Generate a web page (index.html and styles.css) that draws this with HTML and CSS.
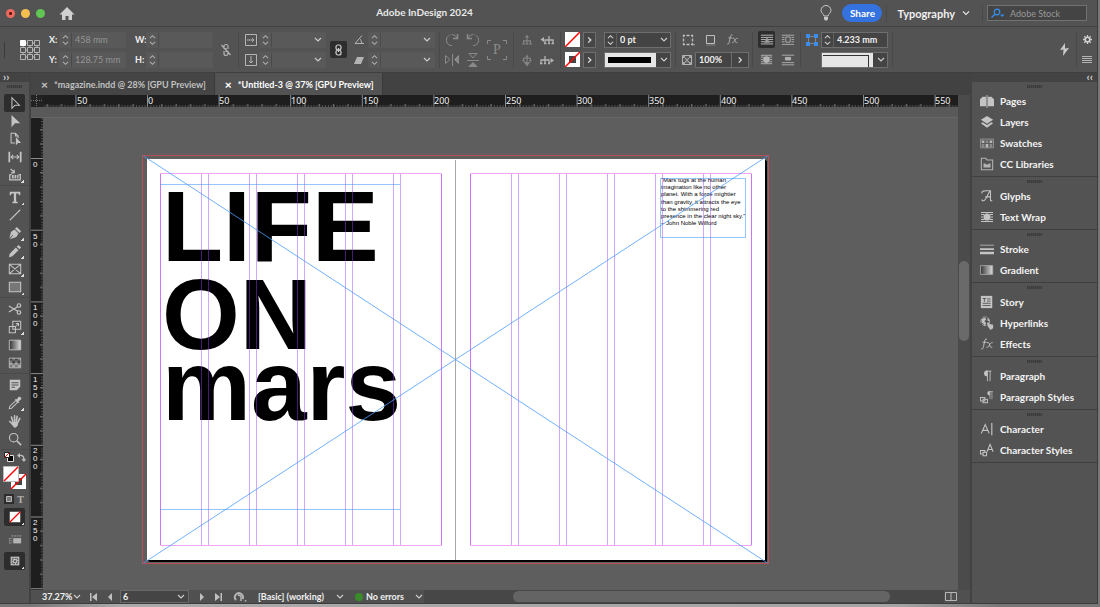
FILE: index.html
```html
<!doctype html>
<html lang='en-US'>
<head>
  <title>Adobe InDesign 2024</title>
  <meta charset='utf-8'>
  <link rel="stylesheet" href="styles.css">
</head>
<body>

<svg class='defs' aria-hidden='true'>
  <symbol id='steps' viewBox='0 0 12 16'><path d='M3 6l3-3 3 3M3 10l3 3 3-3' fill='none' stroke='currentColor' stroke-width='1.2'/></symbol>
  <symbol id='right' viewBox='0 0 12 16'><path d='M4.500 5l3 3-3 3' fill='none' stroke='currentColor' stroke-width='1.5'/></symbol>
  <symbol id='wrap' viewBox='0 0 16 16'><path d='M2 3.500h12M2 5.500h3M11 5.500h3M2 8h2M12 8h2M2 10.500h3M11 10.500h3M2 12.500h12' stroke='currentColor'/><circle cx='8' cy='8' r='3.600' fill='currentColor'/></symbol>
  <symbol id='fx' viewBox='0 0 16 16'><path d='M8 2.500c-2-1-2.500 1-3 3.500l-1 5c-.4 2-1 3-2.500 2.500M3 6h4.500M8 6.500c2-.8 2.500.5 3 2.500s1 3.500 3 2.500M14.500 6.500c-2-.3-3 1.500-4 3s-1.500 2.500-3 2.300' fill='none' stroke='currentColor' stroke-width='1.100'/></symbol>
  <symbol id='para' viewBox='0 0 16 16'><path d='M8 2v6a3 3 0 0 1 0-6z' fill='currentColor' stroke='currentColor'/><path d='M8.500 2v12M11.500 2v12M8 2.500h5' stroke='currentColor'/></symbol>
  <symbol id='tree' viewBox='0 0 14 14'><path d='M7 3v9M3 12V8h8v4M1.500 11.500h3M5.500 11.500h3M9.500 11.500h3' fill='none' stroke='currentColor' stroke-width='1.300'/><path d='M4.500 4L7 1l2.500 3z' fill='currentColor'/></symbol>
</svg>

<div class='window'>
  <header class='titlebar'>
    <div class='lights'><i class='close'></i><i class='min'></i><i class='max'></i></div>
    <button class='plain home' aria-label='Home'><svg width='16' height='14' viewBox='0 0 16 14'><path d='M8 0l7.500 7.500H13V13H9.500V9h-3v4H3V7.500H.5z' fill='#d0d0d0'/></svg></button>
    <h1>Adobe InDesign 2024</h1>
    <div class='title-right'>
      <button class='plain bulb' aria-label='Learn'><svg width='12' height='16' viewBox='0 0 12 16'><path d='M4 11c0-2-3-3-3-5.500a5 5 0 0 1 10 0C11 8 8 9 8 11z' fill='none' stroke='#c8c8c8'/><path d='M4 12h4v2l-1 1.500H5L4 14z' fill='#c8c8c8'/></svg></button>
      <button class='share'>Share</button>
      <button class='plain workspace-name'>Typography <svg width='8' height='6' viewBox='0 0 8 6'><path d='M1 1.500l3 3 3-3' fill='none' stroke='#e0e0e0' stroke-width='1.200'/></svg></button>
      <label class='search'>
        <svg width='14' height='11' viewBox='0 0 14 11'><path d='M.5 9.500L4 6.200' stroke='#378ef0' stroke-width='1.300'/><circle cx='6' cy='4' r='2.800' fill='none' stroke='#378ef0' stroke-width='1.200'/><path d='M9 6.500h4.500L11.200 9z' fill='#378ef0'/></svg>
        <input type='search' placeholder='Adobe Stock' aria-label='Adobe Stock'>
      </label>
    </div>
  </header>

  <section class='controls'>
    <div class='grip-left'></div>
    <div class='refpoint'>
      <svg width='20' height='20' viewBox='0 0 20 20' fill='none' stroke='#b4b4b4'><path d='M5 3h10M5 10h10M5 17h10M3 5v10M10 5v10M17 5v10'/><g fill='#535353'><path d='M7.500.5h5v5h-5zM14.500.5h5v5h-5zM.5 7.500h5v5h-5zM7.500 7.500h5v5h-5zM14.500 7.500h5v5h-5zM.5 14.500h5v5h-5zM7.500 14.500h5v5h-5zM14.500 14.500h5v5h-5z'/></g><path d='M.5.5h5v5h-5z' fill='#fff' stroke='#fff'/></svg>
    </div>
    <div class='group pos'>
      <label for='x'>X:</label>
      <div class='field dim'><svg><use href='#steps'/></svg><input id='x' value='458 mm'></div>
      <label for='y'>Y:</label>
      <div class='field dim'><svg><use href='#steps'/></svg><input id='y' value='128.75 mm'></div>
    </div>
    <div class='group size'>
      <label for='w'>W:</label>
      <div class='field dim'><svg><use href='#steps'/></svg><input id='w'></div>
      <label for='h'>H:</label>
      <div class='field dim'><svg><use href='#steps'/></svg><input id='h'></div>
    </div>
    <button class='plain unlink' aria-label='Constrain proportions'><svg width='10' height='14' viewBox='0 0 10 14' fill='none' stroke='#b4b4b4' stroke-width='1.200'><path d='M3 6V3.500a2 2 0 0 1 4 0V6M3 8v2.500a2 2 0 0 0 4 0V8M5 5v4M.5 2l9 10'/></svg></button>
    <div class='group scale'>
      <svg width='12' height='12' viewBox='0 0 12 12' fill='none' stroke='#b4b4b4'><path d='M.5.5h11v11H.5zM2 6h7M7 4l2 2-2 2'/></svg>
      <div class='field dim'><svg><use href='#steps'/></svg><select aria-label='Scale X'><option></option></select></div>
      <svg width='12' height='12' viewBox='0 0 12 12' fill='none' stroke='#b4b4b4'><path d='M.5.5h11v11H.5zM6 2v7M4 7l2 2 2-2'/></svg>
      <div class='field dim'><svg><use href='#steps'/></svg><select aria-label='Scale Y'><option></option></select></div>
    </div>
    <button class='link' aria-label='Constrain scaling'><svg width='7' height='12' viewBox='0 0 7 12' fill='none' stroke='#d0d0d0' stroke-width='1.200'><rect x='1' y='1' width='5' height='5' rx='2'/><rect x='1' y='6' width='5' height='5' rx='2'/><path d='M3.500 4v4'/></svg></button>
    <div class='group angle'>
      <svg width='10' height='12' viewBox='0 0 10 12' fill='none' stroke='#b4b4b4'><path d='M8 1.500L1 9.500h9M5.500 4.500c1.500 1 2 3 2 5'/></svg>
      <div class='field dim'><svg><use href='#steps'/></svg><select aria-label='Rotation'><option></option></select></div>
      <svg width='10' height='12' viewBox='0 0 10 12'><path d='M3 3h7L7 10H0z' fill='#b4b4b4'/></svg>
      <div class='field dim'><svg><use href='#steps'/></svg><select aria-label='Shear'><option></option></select></div>
    </div>
    <div class='group rotate'>
      <svg width='14' height='14' viewBox='0 0 14 14' fill='none' stroke='#8a8a8a'><path d='M7 12.500A5.500 5.500 0 1 1 12 5' stroke-dasharray='14 1 1 1'/><path d='M12.500 1v4.500H8' stroke-width='1.500'/></svg>
      <svg width='14' height='14' viewBox='0 0 14 14' fill='none' stroke='#8a8a8a'><path d='M7 12.500A5.500 5.500 0 1 0 2 5' stroke-dasharray='14 1 1 1'/><path d='M1.500 1v4.500H6' stroke-width='1.500'/></svg>
      <div class='pmark'><svg width='20' height='20' viewBox='0 0 20 20' fill='none' stroke='#8a8a8a'><path d='M.5 4V.5H4M16 .5h3.500V4M19.500 16v3.500H16M4 19.500H.5V16'/></svg><span>P</span></div>
      <svg width='14' height='14' viewBox='0 0 14 14' fill='none' stroke='#8a8a8a'><path d='M.5 2.500v8L5 6.500zM7.500 1v12'/><path d='M13.500 2.500v8L9.500 6.500z' fill='#8a8a8a'/></svg>
      <svg width='14' height='14' viewBox='0 0 14 14' fill='none' stroke='#8a8a8a'><path d='M3 .5h8L7 5zM1 7.500h12'/><path d='M3 13.500h8L7 9.500z' fill='#8a8a8a'/></svg>
    </div>
    <div class='group hier'>
      <svg class='off' width='12' height='14'><use href='#tree'/></svg>
      <svg width='14' height='12' viewBox='0 0 14 12' fill='none' stroke='currentColor' stroke-width='1.300'><path d='M9 2v8M5 10V6h8v4M4 9.500h2.500M8 9.500h2M11.500 9.500H14'/><path d='M4 3v5L.5 5.500z' fill='currentColor' stroke='none'/></svg>
      <svg class='off' width='12' height='14' viewBox='0 0 14 14' fill='none' stroke='currentColor' stroke-width='1.300'><path d='M7 1v10M3 8V5h8v3M1.500 8h3M9.500 8h3M5.500 3h3'/><path d='M4.500 10L7 13.500 9.500 10z' fill='currentColor'/></svg>
      <svg width='14' height='12' viewBox='0 0 14 12' fill='none' stroke='currentColor' stroke-width='1.300'><path d='M5 2v8M1 10V6h8v4M0 9.500h2.500M4 9.500h2M8 9.500h2'/><path d='M10.500 4v5L14 6.500z' fill='currentColor' stroke='none'/></svg>
    </div>
    <div class='group swatches'>
      <div class='swatch'><svg viewBox='0 0 15 15'><path d='M0 15L15 0' stroke='#f00' stroke-width='1.500'/></svg></div>
      <button class='box' aria-label='Fill'><svg><use href='#right'/></svg></button>
      <div class='swatch'><svg viewBox='0 0 15 15'><path d='M4 4h7v7H4z' fill='#444'/><path d='M0 15L15 0' stroke='#f00' stroke-width='1.500'/></svg></div>
      <button class='box' aria-label='Stroke'><svg><use href='#right'/></svg></button>
    </div>
    <div class='group stroke'>
      <div class='field'><svg><use href='#steps'/></svg><select class='ruled' aria-label='Stroke weight'><option>0 pt</option></select></div>
      <div class='field preview'><div class='solid'></div><select class='ruled' aria-label='Stroke type'><option></option></select></div>
    </div>
    <div class='group effects'>
      <div class='trio'>
        <svg width='13' height='12' viewBox='0 0 13 12' fill='none' stroke='#c0c0c0'><path d='M1.500 1.500h9v9h-9z' stroke-dasharray='3 1.500' stroke-dashoffset='1.500' stroke-width='1.300'/><path d='M12 10v1.500'/></svg>
        <svg width='11' height='12' viewBox='0 0 11 12' fill='none' stroke='#c0c0c0'><path d='M1.500 1.500h8v8h-8z'/><path d='M1 11h9.500' stroke='#808080'/></svg>
        <svg width='13' height='13'><use href='#fx'/></svg>
      </div>
      <div class='duo'>
        <svg width='10' height='10' viewBox='0 0 10 10'><path d='M.5.5h9v9h-9z' fill='none' stroke='#b4b4b4'/><path d='M1 1h2v2H1zM7 1h2v2H7zM3 3h1.500v1.500H3zM5.500 3H7v1.500H5.500zM4 4.500h2v1.500H4zM3 6h1.500v1.500H3zM5.500 6H7v1.500H5.500zM1 7h2v2H1zM7 7h2v2H7z' fill='#a4a4a4'/></svg>
        <div class='field'><input value='100%' aria-label='Opacity'><svg class='more'><use href='#right'/></svg></div>
      </div>
    </div>
    <div class='group wraps'>
      <button class='plain on' aria-label='No wrap'><svg width='14' height='14' viewBox='0 0 16 16' stroke='#c8c8c8'><path d='M1 2.500h14M1 5h14M1 7.500h14M1 10h14M1 12.500h14'/><path d='M8 4l3 7H5z' fill='#999' stroke='none'/></svg></button>
      <button class='plain' aria-label='Wrap box'><svg width='14' height='14' viewBox='0 0 16 16' stroke='#b4b4b4' fill='none'><path d='M1 2.500h14M1 5h3M12 5h3M1 7.500h3M12 7.500h3M1 10h3M12 10h3M1 13h14M5.500 4.500h5v6h-5z'/></svg></button>
      <button class='plain' aria-label='Wrap shape'><svg width='15' height='15'><use href='#wrap'/></svg></button>
      <button class='plain' aria-label='Jump object'><svg width='14' height='14' viewBox='0 0 16 16' stroke='#b4b4b4'><path d='M1 2.500h14M1 13.500h14M1 11h14'/><path d='M5 5h6v3H5z' fill='#b4b4b4'/></svg></button>
    </div>
    <div class='group corners'>
      <svg width='12' height='12' viewBox='0 0 12 12'><path d='M2.500 2.500h7v7h-7z' fill='none' stroke='#b4b4b4' stroke-dasharray='1 1'/><path d='M0 0h4v4H0zM8 0h4v4H8zM0 8h4v4H0zM8 8h4v4H8z' fill='#378ef0'/></svg>
      <div class='field'><svg><use href='#steps'/></svg><input value='4.233 mm' aria-label='Corner radius'></div>
      <div></div>
      <div class='field preview'><div class='corner'></div><select class='ruled' aria-label='Corner shape'><option></option></select></div>
    </div>
    <div class='spring'></div>
    <button class='plain bolt' aria-label='Quick apply'><svg width='9' height='13' viewBox='0 0 9 13'><path d='M5 0L0 7l3.500-.5L3 13l6-8-4 .5z' fill='#c8c8c8'/></svg></button>
    <div class='group prefs'>
      <svg width='9' height='9' viewBox='0 0 9 9'><circle cx='4.500' cy='4.500' r='2.300' fill='none' stroke='#d0d0d0' stroke-width='1.600'/><path d='M4.500 0v2M4.500 7v2M0 4.500h2M7 4.500h2M1.300 1.300l1.400 1.400M6.300 6.300l1.400 1.400M1.300 7.700l1.400-1.400M6.300 2.700l1.400-1.400' stroke='#d0d0d0' stroke-width='1.300'/></svg>
      <svg width='10' height='8' viewBox='0 0 10 8'><path d='M0 .5h10M0 2.500h10M0 4.500h10M0 6.500h10' stroke='#b4b4b4'/></svg>
    </div>
  </section>

  <main class='workspace'>
    <nav class='tools' aria-label='Tools'>
      <div class='dock-head'>››</div>
      <div class='handle'></div>
      <div class='toolset'>
        <button class='tool active' aria-label='Selection'><svg viewBox='0 0 16 16'><path d='M4.500 2v12l3.500-3.500h5z' fill='none' stroke='currentColor' stroke-width='1.200'/></svg></button>
        <button class='tool' aria-label='Direct selection'><svg viewBox='0 0 16 16'><path d='M4 1v14l4-4.500h6z' fill='currentColor'/></svg></button>
        <button class='tool' aria-label='Page'><svg viewBox='0 0 16 16'><path d='M8 12.500H3.500v-11h5l3 3V7M8.500 1.500v3h3' fill='none' stroke='currentColor' stroke-width='1.200'/><path d='M9 6v9l2.500-2.500H15z' fill='currentColor'/></svg></button>
        <button class='tool' aria-label='Gap'><svg viewBox='0 0 16 16'><path d='M1.500 2v12M14.500 2v12' stroke='currentColor' stroke-width='2'/><path d='M3.500 8h9M6 5.500L3.500 8 6 10.500M10 5.500L12.500 8 10 10.500' fill='none' stroke='currentColor' stroke-width='1.200'/></svg></button>
        <button class='tool more' aria-label='Content collector'><svg viewBox='0 0 16 16'><path d='M2 7.500v6h12v-6h-2M2 7.500h2M3 1l4 4M7 2v3.500H3.500' fill='none' stroke='currentColor' stroke-width='1.500'/><path d='M4.500 8h2v4h-2zM7.500 8h2v4h-2zM10.500 8h1.500v4h-1.500z' fill='currentColor'/></svg></button>
      </div>
      <div class='toolset'>
        <button class='tool more' aria-label='Type'><svg viewBox='0 0 16 16'><path d='M2 2h12v4h-1.300c-.3-1.500-.7-2-2-2H9.300v8.500c0 .8.5 1 1.700 1V15H5v-1.500c1.200 0 1.700-.2 1.700-1V4H5.300c-1.300 0-1.700.5-2 2H2z' fill='currentColor'/></svg></button>
        <button class='tool' aria-label='Line'><svg viewBox='0 0 16 16'><path d='M2 14L14 2' stroke='currentColor' stroke-width='1.300'/></svg></button>
        <button class='tool more' aria-label='Pen'><svg viewBox='0 0 16 16'><path d='M10 1l5 5-2 2-5-5zM7.500 4l4.500 4.500-2.500 4L2 15l4-4.500L5.500 10 1.500 14l2-7.500z' fill='currentColor'/></svg></button>
        <button class='tool more' aria-label='Pencil'><svg viewBox='0 0 16 16'><path d='M12 1l3 3-2 2-3-3zM9 4l3 3-7 7-4 1 1-4z' fill='currentColor'/></svg></button>
        <button class='tool more' aria-label='Rectangle frame'><svg viewBox='0 0 16 16'><path d='M1.500 2.500h13v11h-13zM2 3l12 10M14 3L2 13' fill='none' stroke='currentColor' stroke-width='1.200'/></svg></button>
        <button class='tool more' aria-label='Rectangle'><svg viewBox='0 0 16 16'><path d='M1.500 2.500h13v11h-13z' fill='#777' stroke='currentColor' stroke-width='1.200'/></svg></button>
      </div>
      <div class='toolset'>
        <button class='tool' aria-label='Scissors'><svg viewBox='0 0 16 16' fill='none' stroke='currentColor' stroke-width='1.400'><circle cx='12.500' cy='4' r='2'/><circle cx='12.500' cy='12' r='2'/><path d='M11 5.500L1 11.500M11 10.500L1 4.500'/></svg></button>
        <button class='tool more' aria-label='Free transform'><svg viewBox='0 0 16 16' fill='none' stroke='currentColor' stroke-width='1.200'><path d='M5.500 1.500h9v9h-9zM5 7.500H1.500v7h7V11M5.500 7.500h3V10M8 8l4-4M9 4h3v3'/></svg></button>
        <button class='tool' aria-label='Gradient swatch'><svg viewBox='0 0 16 16'><defs><linearGradient id='grad'><stop stop-color='#333'/><stop offset='1' stop-color='#ddd'/></linearGradient></defs><path d='M1.500 2.500h13v11h-13z' fill='url(#grad)' stroke='currentColor'/></svg></button>
        <button class='tool' aria-label='Gradient feather'><svg viewBox='0 0 16 16'><path d='M1.500 2.500h13v11h-13z' fill='#777' stroke='currentColor'/><path d='M2 3h3v2H2zM8 3h3v2H8zM5 5h3v3H5zM11 5h3v3h-3z' fill='#444'/><path d='M2 8h3v2H2zM8 8h3v2H8zM5 10h3v3H5zM11 10h3v3h-3z' fill='#aaa'/></svg></button>
      </div>
      <div class='toolset'>
        <button class='tool' aria-label='Note'><svg viewBox='0 0 16 16'><path d='M2 2h12v8l-4 4H2z' fill='currentColor'/><path d='M4 5.500h8M4 8h8M4 10.500h4' stroke='#535353' stroke-width='1.200'/></svg></button>
        <button class='tool more' aria-label='Eyedropper'><svg viewBox='0 0 16 16'><path d='M9 5l2 2-7 7-2.500.5L2 12z' fill='none' stroke='currentColor' stroke-width='1.200'/><path d='M8 4l1-1 1 1 2-3c2-1 4 1 3 3l-3 2 1 1-1 1z' fill='currentColor'/></svg></button>
        <button class='tool' aria-label='Hand'><svg viewBox='0 0 16 16' fill='none' stroke='currentColor' stroke-width='1.800' stroke-linecap='round'><path d='M5.500 9L4 3.500M7.500 8V2M9.500 8l1-5.500M11.500 9l2-4M5.500 12L2 8.500'/><path d='M5.500 9h6l-1 4.500-2 1.500H7l-2-3z' fill='currentColor' stroke-width='1'/></svg></button>
        <button class='tool' aria-label='Zoom'><svg viewBox='0 0 16 16' fill='none' stroke='currentColor'><circle cx='6.500' cy='6.500' r='4.800' stroke-width='1.300'/><path d='M10 10l5 5' stroke-width='1.800'/></svg></button>
      </div>
      <div class='toolset paint'>
        <div class='pair'>
          <svg width='10' height='10' viewBox='0 0 10 10'><path d='M3.500 3.500h6v6h-6z' fill='#000' stroke='#ddd'/><path d='M.5.5h5v5h-5z' fill='#fff' stroke='#222'/><path d='M1 5l4-4' stroke='#f00'/></svg>
          <svg width='9' height='9' viewBox='0 0 9 9' fill='none' stroke='#c0c0c0' stroke-width='1.400'><path d='M2 2.500c4-.5 5 1 5 4.500'/><path d='M3 0L0 2.500 3 5zM4.500 6h4.500L7 9z' fill='#c0c0c0' stroke='none'/></svg>
        </div>
        <svg width='24' height='24' viewBox='0 0 24 24'><path d='M8 8h15v15H8z' fill='#fff'/><path d='M12 12h7v7h-7z' fill='#444'/><path d='M8 23L23 8' stroke='#f00' stroke-width='1.500'/><path d='M.5.5h15v15H.5z' fill='#fff' stroke='#bbb'/><path d='M1 15L15 1' stroke='#f00' stroke-width='1.500'/></svg>
        <div class='pair'>
          <svg width='10' height='10' viewBox='0 0 10 10'><path d='M0 0h10v10H0z' fill='#2d2d2d'/><path d='M2.500 2.500h5v5h-5z' fill='#777' stroke='#bbb'/></svg>
          <span class='serif'>T</span>
        </div>
        <button class='tool active more' aria-label='Apply none'><svg viewBox='0 0 16 16'><path d='M2 2h12v12H2z' fill='#fff'/><path d='M2 14L14 2' stroke='#f00' stroke-width='1.500'/></svg></button>
        <button class='tool' aria-label='View options'><svg viewBox='0 0 16 16'><path d='M6 7h9v6H6z' fill='#b4b4b4'/><path d='M4 4.500h11M1 7.500h4M1 10h4M1 12.500h4' stroke='#b4b4b4' stroke-dasharray='2 1'/></svg></button>
        <button class='tool active more' aria-label='Screen mode'><svg viewBox='0 0 16 16'><path d='M3 3h10v10H3z' fill='#bbb'/><path d='M5 5h6v6H5z' fill='none' stroke='#444' stroke-dasharray='2 1'/><path d='M7 7h2v2H7z' fill='#444'/></svg></button>
      </div>
    </nav>

    <section class='document'>
      <div class='tabs'>
        <a href='#magazine'><b>×</b>*magazine.indd @ 28% [GPU Preview]</a>
        <a href='#untitled' class='current'><b>×</b>*Untitled-3 @ 37% [GPU Preview]</a>
      </div>

      <svg class='ruler-x'>
        <defs>
          <pattern id='tx' x='116' width='71.600' height='12' patternUnits='userSpaceOnUse'>
            <path d='M.5 0v12' stroke='#8a8a8a'/>
            <path d='M14.800 9v3M29.100 9v3M43.500 9v3M57.800 9v3' stroke='#888'/>
            <path d='M3.400 11h69' stroke='#555' stroke-width='2' stroke-dasharray='1 1.860'/>
          </pattern>
        </defs>
        <rect x='12' width='100%' height='12' fill='url(#tx)'/>
        <rect width='12' height='12' fill='#222'/>
        <path d='M0 5.500h12M5.500 0v12' stroke='#777' stroke-dasharray='1 1'/>
        <text x='46' y='9'>50</text><text x='117' y='9'>0</text><text x='188' y='9'>50</text><text x='260' y='9'>100</text>
        <text x='332' y='9'>150</text><text x='403' y='9'>200</text><text x='475' y='9'>250</text><text x='546' y='9'>300</text>
        <text x='618' y='9'>350</text><text x='690' y='9'>400</text><text x='761' y='9'>450</text><text x='833' y='9'>500</text><text x='904' y='9'>550</text>
      </svg>

      <div class='strip'></div>

      <svg class='ruler-y'>
        <defs>
          <pattern id='ty' y='40' width='12' height='71.700' patternUnits='userSpaceOnUse'>
            <path d='M0 .5h12' stroke='#8a8a8a'/>
            <path d='M9 14.800h3M9 29.100h3M9 43.500h3M9 57.800h3' stroke='#888'/>
            <path d='M11 3.400v69' stroke='#555' stroke-width='2' stroke-dasharray='1 1.860'/>
          </pattern>
        </defs>
        <rect width='12' height='100%' fill='url(#ty)'/>
        <text x='2' y='49'>0</text>
        <text x='2' y='121'>5</text><text x='2' y='129'>0</text>
        <text x='2' y='192'>1</text><text x='2' y='200'>0</text><text x='2' y='208'>0</text>
        <text x='2' y='264'>1</text><text x='2' y='272'>5</text><text x='2' y='280'>0</text>
        <text x='2' y='335'>2</text><text x='2' y='343'>0</text><text x='2' y='351'>0</text>
        <text x='2' y='407'>2</text><text x='2' y='415'>5</text><text x='2' y='423'>0</text>
      </svg>

      <div class='pasteboard'>
        <div class='spread'>
          <h2 class='headline'><span>LIFE</span><span>ON</span><span class='small'>mars</span></h2>
          <p class='quote'>“Mars tugs at the human<br>imagination like no other<br>planet. With a force mightier<br>than gravity, it attracts the eye<br>to the shimmering red<br>presence in the clear night sky.”<br>– John Noble Wilford</p>
          <svg class='guides' viewBox='0 0 627 409' width='627' height='409' fill='none'>
            <path d='M313.500 5v400' stroke='#a8a8a8'/>
            <g stroke='#eea6f2'><path d='M18.500 18.500h281v372h-281zM328.500 18.500h281v372h-281z'/></g>
            <path stroke='#9b3fff' stroke-opacity='.45' d='M18.500 19v371M59.500 19v371M66.500 19v371M107.500 19v371M114.500 19v371M155.500 19v371M162.500 19v371M203.500 19v371M210.500 19v371M251.500 19v371M258.500 19v371M299.500 19v371M328.500 19v371M369.500 19v371M376.500 19v371M417.500 19v371M424.500 19v371M465.500 19v371M472.500 19v371M513.500 19v371M520.500 19v371M561.500 19v371M568.500 19v371M609.500 19v371'/>
            <g stroke='#4f9dff' stroke-opacity='.6'>
              <path d='M18 29.500h240M18 354.500h240M518.500 23.500h85v59h-85z'/>
              <path d='M0 0l627 409M627 0L0 409' stroke-opacity='.8'/>
            </g>
            <path d='M.5.5h626v408H.5z' stroke='#b84e58'/>
          </svg>
        </div>
      </div>

      <div class='scroll-y'><div class='thumb'></div></div>

      <footer class='status'>
        <select class='zoom' aria-label='Zoom level'><option>37.27%</option></select>
        <button class='plain' aria-label='First page'><svg width='8' height='8' viewBox='0 0 8 8' fill='#c0c0c0'><path d='M0 0h1.500v8H0zM7 0v8L2 4z'/></svg></button>
        <button class='plain' aria-label='Previous page'><svg width='8' height='8' viewBox='0 0 8 8' fill='#c0c0c0'><path d='M6 0v8L2 4z'/></svg></button>
        <select class='page ruled' aria-label='Page'><option>6</option></select>
        <button class='plain' aria-label='Next page'><svg width='8' height='8' viewBox='0 0 8 8' fill='#c0c0c0'><path d='M2 0v8l4-4z'/></svg></button>
        <button class='plain' aria-label='Last page'><svg width='8' height='8' viewBox='0 0 8 8' fill='#c0c0c0'><path d='M6.500 0H8v8H6.500zM1 0v8l5-4z'/></svg></button>
        <button class='plain open' aria-label='Open'><svg width='14' height='11' viewBox='0 0 14 11'><path d='M3 9a4 4 0 1 1 6.500-1' fill='none' stroke='#b4b4b4' stroke-width='2'/><path d='M5 4l3 1v5M12.500 9v1.500' fill='none' stroke='#b4b4b4' stroke-width='1.500'/></svg></button>
        <select class='profile' aria-label='Preflight profile'><option>[Basic] (working)</option></select>
        <i class='ok'></i>
        <select class='errors' aria-label='Preflight status'><option>No errors</option></select>
        <div class='scroll-x'><div class='thumb'></div></div>
        <button class='plain split' aria-label='Split view'><svg width='12' height='9' viewBox='0 0 12 9' fill='none' stroke='#b8b8b8'><path d='M.5.5h11v8H.5zM6 0v9'/></svg></button>
      </footer>
    </section>

    <aside class='dock'>
      <div class='dock-head'>‹‹</div>
      <div class='panels'>
        <div class='handle'></div>
        <a href='#pages'><svg viewBox='0 0 16 16' fill='currentColor'><path d='M0 6l3-3h4v11H0zM9 3h4l3 3v8H9zM7.500 1h1v15h-1z'/></svg>Pages</a>
        <a href='#layers'><svg viewBox='0 0 16 16' fill='currentColor'><path d='M8 1l7 4.500L8 10 1 5.500zM1 9.500l2-1.300 5 3.200 5-3.200 2 1.300L8 14.500z'/></svg>Layers</a>
        <a href='#swatches'><svg viewBox='0 0 16 16'><path d='M.5 3.500h15v10H.5z' fill='#5c5c5c' stroke='#999'/><path d='M2 5h3v3H2zM11 5h3v3h-3zM6.500 9h3v4h-3z' fill='#b8b8b8'/><path d='M6.500 5h3v3h-3zM2 9h3v4H2zM11 9h3v4h-3z' fill='#8a8a8a'/></svg>Swatches</a>
        <a href='#libraries'><svg viewBox='0 0 16 16'><path d='M1.500 14.500v-13h5l1.500 2h6.500v11z' fill='none' stroke='#b4b4b4' stroke-width='1.200'/><path d='M4 12V7.500h2l1 1h2l1-1h2V12z' fill='#b4b4b4'/></svg>CC Libraries</a>
      </div>
      <div class='panels'>
        <div class='handle'></div>
        <a href='#glyphs'><svg viewBox='0 0 16 16' fill='none' stroke='currentColor' stroke-width='1.200'><path d='M2 5c0-3 3-3 5-3h5v11.500h2M12 2C9 4 7 13.500 4 13.500c-2 0-2-1.500-2-1.500M6 9h6'/></svg>Glyphs</a>
        <a href='#textwrap'><svg viewBox='1 1 14 14'><use href='#wrap' width='16' height='16'/></svg>Text Wrap</a>
      </div>
      <div class='panels'>
        <div class='handle'></div>
        <a href='#stroke'><svg viewBox='0 0 16 16' fill='currentColor'><path d='M0 3h16v1H0zM0 7h16v2H0zM0 11h16v3H0z'/></svg>Stroke</a>
        <a href='#gradient'><svg viewBox='0 0 16 16'><path d='M.5 3h14v10H.5z' fill='url(#grad)' stroke='#aaa'/></svg>Gradient</a>
      </div>
      <div class='panels'>
        <div class='handle'></div>
        <a href='#story'><svg viewBox='0 0 16 16'><path d='M1 1h13v14H1z' fill='currentColor'/><path d='M3 4h4M5 4v4M8 4.500h4M8 7h4M3 9.500h9M3 12h9' stroke='#535353'/></svg>Story</a>
        <a href='#hyperlinks'><svg viewBox='0 0 16 16'><circle cx='6' cy='6' r='5' fill='none' stroke='#b4b4b4' stroke-dasharray='5 1.500'/><path d='M2 3l4-1 1 2-2 2 2 2-1 3-4-4zM8 2l3 3-2 1zM8 8l2-1 1 2 4 1v4l-3 2-3-4z' fill='#c0c0c0'/></svg>Hyperlinks</a>
        <a href='#effects'><svg><use href='#fx'/></svg>Effects</a>
      </div>
      <div class='panels'>
        <div class='handle'></div>
        <a href='#paragraph'><svg><use href='#para'/></svg>Paragraph</a>
        <a href='#pstyles'><svg viewBox='0 0 16 16'><use href='#para' x='5' y='0' width='12' height='12'/><path d='M.5 8.500h5v4h-5zM3.500 10.500h5v4h-5z' fill='#535353' stroke='#c0c0c0' stroke-width='1.200'/></svg>Paragraph Styles</a>
      </div>
      <div class='panels'>
        <div class='handle'></div>
        <a href='#character'><svg viewBox='0 0 16 16' fill='none' stroke='currentColor' stroke-width='1.300'><path d='M1.500 13L6 3l4.500 10M3.500 9.500h5M13.500 1v14'/></svg>Character</a>
        <a href='#cstyles'><svg viewBox='0 0 16 16' fill='none' stroke='currentColor' stroke-width='1.200'><path d='M8 10l3.500-8.500L15 10M9 7.500h5M.5 8.500h5v4h-5z'/><path d='M3.500 10.500h4v4h-4z' fill='#535353'/></svg>Character Styles</a>
      </div>
    </aside>
  </main>
</div>

</body>
</html>
```
FILE: styles.css
```css
*, html { box-sizing: border-box; }
body { margin: 0; height: 100vh; padding: 0 2px 3px 0; background: linear-gradient(to right, #777 30px, #aaa 120px, #a4a4a4 900px, #777 1000px); color: #f0f0f0; font: bold 9px Lato, 'Open Sans', sans-serif; overflow: hidden; }
a { color: inherit; text-decoration: none; }
svg { display: block; flex: none; }
input, select, button { font: inherit; color: inherit; margin: 0; padding: 0; border: 0; background: none; border-radius: 0; outline: none; min-width: 0; }
select { appearance: none; background: url("data:image/svg+xml,%3Csvg xmlns='http://www.w3.org/2000/svg' width='8' height='6'%3E%3Cpath d='M1 1l3 3 3-3' fill='none' stroke='%23ccc' stroke-width='1.2'/%3E%3C/svg%3E") no-repeat right 3px center; }
.defs { position: absolute; width: 0; height: 0; }
.window { display: flex; flex-direction: column; height: 100%; background: #535353; border-right: 1px solid #3c3c3c; border-bottom: 1px solid #3c3c3c; }
.plain { display: flex; align-items: center; justify-content: center; }

/* title bar */
.titlebar { display: grid; grid-template-columns: 1fr auto 1fr; align-items: center; height: 27px; flex: none; border-bottom: 1px solid #404040; position: relative; }
.titlebar h1 { grid-column: 2; margin: 0; padding-right: 248px; padding-bottom: 3px; font-size: 10px; font-weight: bold; color: #e8e8e8; }
.lights { display: flex; gap: 6px; position: absolute; left: 6px; top: 9px; }
.lights i { width: 9px; height: 9px; border-radius: 50%; }
.close { background: radial-gradient(#5a0f0c 1px, #ee6a5f 2px); }
.min { background: #f5bf4f; }
.max { background: #61c554; }
.home { position: absolute; left: 59px; top: 7px; }
.title-right { grid-column: 3; display: flex; align-items: center; justify-content: flex-end; padding-right: 10px; }
.bulb { width: 14px; margin-right: 9px; }
.share { width: 40px; height: 18px; border-radius: 9px; background: #3472e0; color: #fff; font-size: 10px; }
.workspace-name { gap: 7px; height: 17px; margin-left: 4px; padding: 0 12px 0 10px; border: solid #494949; border-width: 0 1px; font-size: 11px; }
.search { display: flex; align-items: center; gap: 5px; width: 100px; height: 16px; margin-left: 4px; padding-left: 3px; border: 1px solid #727272; background: #444; }
.search input { width: 75px; font-weight: normal; }
.search input::placeholder { color: #999; }

/* control strip */
.controls { display: flex; align-items: center; height: 46px; flex: none; border-bottom: 1px solid #3f3f3f; color: #b4b4b4; }
.grip-left { width: 16px; height: 16px; margin-left: 4px; border-left: 1px solid #3c3c3c; }
.refpoint { width: 29px; }
.group { display: grid; flex: none; grid-auto-rows: 16px; gap: 4px 0; align-items: center; align-content: center; height: 36px; border-left: 1px solid #494949; }
.group label { color: #f0f0f0; white-space: nowrap; }
.pos, .size, .angle { border: 0; }
.pos { grid-template-columns: 10px 67px; width: 86px; }
.size { grid-template-columns: 11px 67px; width: 85px; }
.unlink { width: 11px; margin-right: 7px; }
.scale { grid-template-columns: 14px 67px; width: 92px; padding-left: 6px; }
.link { display: flex; align-items: center; justify-content: center; width: 17px; height: 17px; background: #2d2d2d; border-radius: 2px; }
.angle { grid-template-columns: 14px 67px; width: 92px; padding-left: 7px; }
.rotate { grid-template-columns: 21px 21px 20px; width: 74px; padding-left: 5px; }
.pmark { display: grid; grid-row: 1 / 3; grid-column: 3; place-items: center; color: #8a8a8a; }
.pmark > * { grid-area: 1 / 1; }
.pmark span { font: 14px 'Liberation Serif', serif; }
.hier { grid-template-columns: 19px 16px; width: 47px; padding-left: 7px; }
.off { color: #858585; }
.swatches { grid-template-columns: 15px 13px; column-gap: 3px; width: 40px; padding-left: 4px; }
.swatch { height: 15px; background: #fff; }
.box { height: 16px; border: 1px solid #6e6e6e; background: #464646; color: #e0e0e0; }
.box svg { width: 11px; height: 14px; }
.stroke { grid-template-columns: 67px; width: 75px; padding-left: 4px; border: 0; }
.effects { width: 77px; padding-left: 6px; }
.trio { display: flex; align-items: center; gap: 10px; }
.duo { display: grid; grid-template-columns: 13px 54px; align-items: center; }
.wraps { grid-template-columns: 17px 17px; column-gap: 4px; width: 48px; padding-left: 5px; }
.wraps .on { height: 17px; background: #2d2d2d; border-radius: 2px; }
.corners { grid-template-columns: 15px 67px; width: 93px; padding-left: 5px; border-right: 1px solid #494949; }
.spring { flex: 1; }
.bolt { width: 24px; }
.prefs { width: 21px; justify-items: center; }

.field { display: flex; align-items: stretch; height: 16px; border: 1px solid #6e6e6e; background: #444; color: #f0f0f0; }
.field > svg { width: 12px; height: 14px; border-right: 1px solid #5e5e5e; color: #ddd; }
.field > svg.more { border-right: 0; border-left: 1px solid #6e6e6e; width: 17px; }
.field input, .field select { flex: 1; padding-left: 3px; width: 20px; }
.field select.ruled { background-position: right 2px center; }
.dim { border-color: #585858; background: #595959; color: #959595; }
.dim input { font-weight: normal; }
.dim > svg { border-color: #4a4a4a; color: #b4b4b4; }
.preview > div { width: 51px; background: #e6e6e6; }
.solid { border: solid #e6e6e6; border-width: 4px 5px 4px 3px; }
.preview .solid { background: #000; }
.corner { padding: 2px 4px 1px 1px; }
.corner::before { content: ''; display: block; height: 11px; border: solid #333; border-width: 1px 1px 0 0; }

/* workspace */
.workspace { flex: 1; min-height: 0; display: grid; grid-template-columns: 31px 1fr 125px; background: #424242; }
.dock-head { height: 9px; font-size: 11px; line-height: 7px; background: #434343; color: #d0d0d0; }
.handle { width: 15px; height: 3px; margin: 3px auto 2px; background: repeating-linear-gradient(to right, #3c3c3c 0 1px, #474747 1px 2px); }
.tools { margin-right: 2px; background: #535353; min-height: 0; }
.tools .dock-head { padding-left: 3px; }
.tools .handle { margin-bottom: 6px; }
.toolset { padding: 0 4px 1px; margin-bottom: 2px; border-bottom: 1px solid #4a4a4a; }
.tool { display: flex; align-items: center; justify-content: center; width: 21px; height: 18px; border-radius: 2px; color: #c4c4c4; }
.tool svg { width: 14px; height: 14px; }
.tool.active { background: #2d2d2d; }
.tool.more { background-image: linear-gradient(135deg, transparent 50%, #ddd 50%); background-size: 3px 3px; background-position: right 1px bottom 1px; background-repeat: no-repeat; }
.paint { display: grid; gap: 4px; padding: 0 3px; border: 0; }
.paint .tool { margin: 0 1px; }
.paint .pair { display: flex; justify-content: space-between; align-items: center; height: 10px; padding: 0 1px; }
.serif { font: bold 10px 'Liberation Serif', serif; color: #b4b4b4; padding-right: 2px; }

.document { display: grid; grid-template-columns: 12px 1fr 12px; grid-template-rows: 22px 12px 11px 1fr 13px; min-width: 0; min-height: 0; background: #4b4b4b; margin-right: 2px; }
.tabs { grid-column: 1 / -1; display: flex; background: #424242; }
.tabs a { display: flex; align-items: center; gap: 6px; padding: 0 8px 0 10px; color: #c0c0c0; background: #454545; border-right: 1px solid #3a3a3a; }
.tabs b { font-size: 12px; }
.tabs .current { background: #535353; color: #fff; }
.ruler-x { grid-column: 1 / 3; width: 100%; height: 12px; background: #1e1e1e; }
.ruler-y { grid-row: 4; width: 12px; height: 100%; background: #1e1e1e; }
.ruler-x text { fill: #f0f0f0; font: 9px 'Noto Sans', sans-serif; }
.ruler-y text { fill: #f0f0f0; font: 8px/8px 'Liberation Sans', Arial, sans-serif; }
.strip { grid-row: 3; grid-column: 1 / 3; background: #595959; border-bottom: 1px solid #666; }
.pasteboard { grid-row: 4; grid-column: 2; position: relative; overflow: hidden; background: #5e5e5e; }
.spread { position: absolute; left: 99px; top: 37px; width: 627px; height: 409px; }
.spread::before { content: ''; position: absolute; inset: 4px 4px 4px 5px; background: #fff; box-shadow: 1px 1px #000, 2px 2px #000; }
.headline { position: absolute; left: 20px; top: 27px; margin: 0; font: bold 100px/88px 'Liberation Sans', Arial, sans-serif; color: #000; }
.headline span { display: block; }
.headline .small { line-height: 54px; }
.quote { position: absolute; left: 519px; top: 22px; margin: 0; font: 6px/1.2 'Liberation Sans', Arial, sans-serif; color: #000; white-space: nowrap; }
.guides { position: absolute; left: 0; top: 0; }

.scroll-y { grid-row: 2 / 5; grid-column: 3; display: grid; grid-template-rows: 166fr 80fr 250fr; padding: 0 1px; }
.scroll-y .thumb { grid-row: 2; }
.thumb { background: #6a6a6a; border-radius: 6px; }
.status { grid-row: 5; grid-column: 1 / -1; display: flex; align-items: center; background: #505050; }
.status select { height: 13px; flex: none; }
.status .zoom { width: 40px; margin-left: 11px; margin-right: 4px; background-position: right 1px center; }
.status .plain { width: 16px; flex: none; }
.status .page { width: 69px; margin: 0 5px 0 2px; padding-left: 2px; border: 1px solid #696969; background-color: #454545; }
.status .open { margin: 0 10px 0 6px; }
.profile { width: 86px; background-position: right center; }
.ok { width: 8px; height: 8px; margin: 0 3px 0 11px; border-radius: 50%; background: #3a8b2a; }
.errors { width: 58px; background-position: right 1px center; }
.scroll-x { flex: 1; display: grid; grid-template-columns: 89fr 378fr 54fr; height: 13px; padding: 1px 0; background: #474747; }
.scroll-x .thumb { grid-column: 2; background: #646464; }
.status .split { width: 14px; margin-right: 12px; }

.dock { background: #535353; min-height: 0; }
.dock .dock-head { padding-right: 4px; text-align: right; }
.panels { padding-bottom: 2px; border-bottom: 1px solid #3f3f3f; }
.panels a { display: flex; align-items: center; gap: 6px; height: 21px; padding-left: 8px; color: #f4f4f4; font-size: 10px; }
.panels svg { width: 14px; height: 14px; color: #c4c4c4; }
```
